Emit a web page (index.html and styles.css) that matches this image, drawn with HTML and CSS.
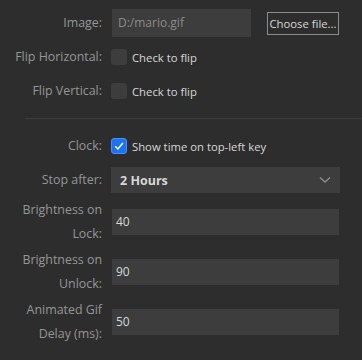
FILE: index.html
```html
<!DOCTYPE html>
<html>
	<head>
		<title>settings</title>
		<meta charset="utf-8">
		<link rel="stylesheet" href="styles.css">
	</head>
	<body>
		<div class="wrap">
			<div class="item">
				<div class="label">Image:</div>
				<div class="value fileRow">
					<div class="field fileName">D:/mario.gif</div>
					<button class="chooseBtn">Choose file...</button>
				</div>
			</div>
			<div class="item">
				<div class="label">Flip Horizontal:</div>
				<div class="value check"><span class="box"></span><span>Check to flip</span></div>
			</div>
			<div class="item">
				<div class="label">Flip Vertical:</div>
				<div class="value check"><span class="box"></span><span>Check to flip</span></div>
			</div>

			<hr class="divider">

			<div class="item">
				<div class="label">Clock:</div>
				<div class="value check">
					<span class="box checked">
						<svg width="12" height="12" viewBox="0 0 12 12"><path d="M2.2 6.3 L4.9 9 L9.9 3" fill="none" stroke="#fff" stroke-width="1.5"/></svg>
					</span>
					<span>Show time on top-left key</span>
				</div>
			</div>
			<div class="item">
				<div class="label">Stop after:</div>
				<div class="value">
					<div class="select">
						<span>2 Hours</span>
						<svg width="12" height="8" viewBox="0 0 12 8"><path d="M1 1.5 L6 6 L11 1.5" fill="none" stroke="#8c8c8c" stroke-width="1.5"/></svg>
					</div>
				</div>
			</div>
			<div class="item tall">
				<div class="label">Brightness on Lock:</div>
				<div class="value"><div class="field num">40</div></div>
			</div>
			<div class="item tall">
				<div class="label">Brightness on Unlock:</div>
				<div class="value"><div class="field num">90</div></div>
			</div>
			<div class="item tall">
				<div class="label">Animated Gif Delay (ms):</div>
				<div class="value"><div class="field num">50</div></div>
			</div>
		</div>
	</body>
</html>
```

FILE: styles.css
```css
body {
	margin: 0;
	background: #2d2d2d;
	font-family: "Open Sans", "Noto Sans", sans-serif;
	font-size: 11.3px;
	color: #d8d8d8;
}
.wrap {padding-top: 7px; width: 340px;}
.item {
	display: grid;
	grid-template-columns: 92px 1fr;
	column-gap: 9px;
	align-items: center;
	min-height: 32px;
	margin-bottom: 2px;
	padding-left: 10px;
}
.item.tall {min-height: 48px;}
.label {
	color: #969696;
	text-align: right;
	font-size: 12.4px;
	line-height: 24px;
}
.value {display: flex; align-items: center;}

.field {
	background: #3d3d3d;
	height: 28px;
	line-height: 28px;
	padding: 0 6px;
	box-sizing: border-box;
}
.fileRow {gap: 16px;}
.fileName {width: 139px; color: #8c8c8c; margin-left: 1px; font-size: 12px;}
.chooseBtn {
	width: 72px; height: 23px;
	background: transparent;
	border: 1px solid #8c8c8c;
	color: #d8d8d8;
	font: inherit;
	padding: 0;
	white-space: nowrap;
}
.num {width: 227px; height: 26px; line-height: 26px; padding-left: 4px; margin-left: 1px; font-size: 12px;}

.check {gap: 5px;}
.box {
	width: 16px; height: 16px;
	border-radius: 3px;
	background: #3d3d3d;
	display: flex; align-items: center; justify-content: center;
}
.box.checked {background: #1a73f0; border: 1px solid #4b8ff5; box-sizing: border-box;}

.divider {
	border: none;
	border-top: 1px solid #3d3d3d;
	margin: 11px 0 11px 25px;
	width: 337px;
}

.select {
	width: 229px; height: 26px;
	background: #3d3d3d;
	display: flex; align-items: center; justify-content: space-between;
	padding: 0 9px 0 9px;
	box-sizing: border-box;
	font-weight: bold;
	font-size: 12.5px;
}
```
